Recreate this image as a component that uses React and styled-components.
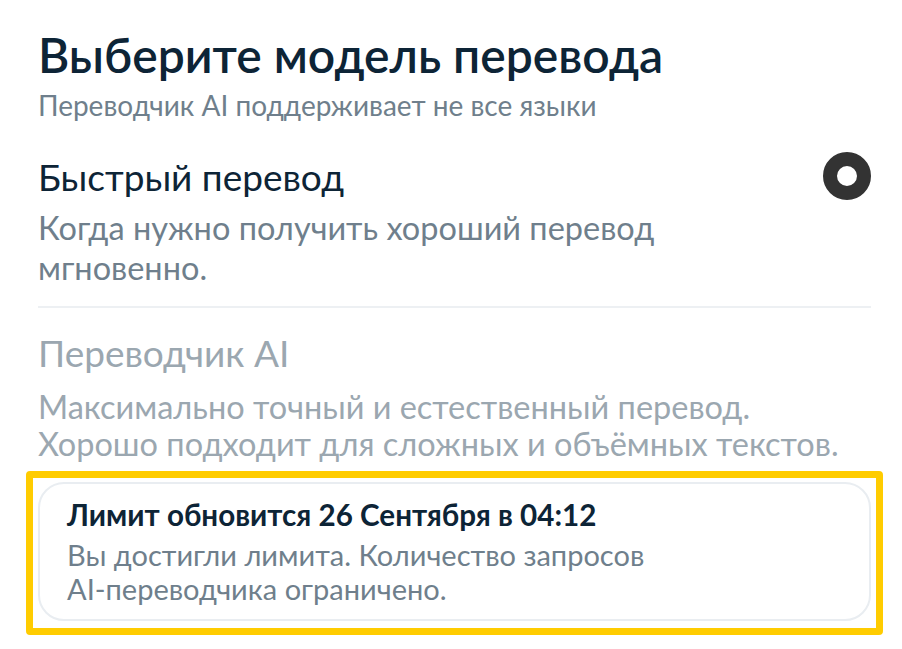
import React from 'react';
import styled, { createGlobalStyle } from 'styled-components';

const Global = createGlobalStyle`
  body {
    margin: 0;
    background: #fff;
    font-family: Lato, "Noto Sans", "DejaVu Sans", sans-serif;
  }
`;

const Page = styled.div`
  padding: 27px 31px 0 38px;
  color: #0d2436;
`;

const Title = styled.h1`
  margin: 0;
  font-size: 48px;
  font-weight: 600;
  line-height: 56px;
  color: #0d2436;
`;

const Subtitle = styled.div`
  margin-top: 4px;
  font-size: 28px;
  line-height: 36px;
  color: #6f7f8c;
`;

const Option = styled.div`
  display: flex;
  align-items: flex-start;
  justify-content: space-between;
  padding: ${p => p.$first ? '32px 0 18px' : '23px 0 0'};
  border-bottom: ${p => p.$divider ? '2px solid #edf0f3' : 'none'};
`;

const OptionText = styled.div`
  display: flex;
  flex-direction: column;
  gap: ${p => p.$disabled ? '13px' : '9px'};
`;

const OptionTitle = styled.div`
  font-size: 37px;
  line-height: 44px;
  color: ${p => p.$disabled ? '#9ba7b0' : '#0d2436'};
`;

const OptionDesc = styled.div`
  font-size: 32.5px;
  line-height: ${p => p.$disabled ? '37px' : '40px'};
  color: ${p => p.$disabled ? '#9ba7b0' : '#6f7f8c'};
  max-width: ${p => p.$narrow ? '700px' : '840px'};
`;

const Radio = styled.div`
  width: 20px;
  height: 20px;
  border-radius: 50%;
  border: 14.5px solid #333;
  margin-top: -3px;
  flex-shrink: 0;
`;

const Highlight = styled.div`
  margin: 9px -12px 0;
  border: 7px solid #ffcc00;
  border-radius: 4px;
  padding: 4px 5px 7px;
`;

const Card = styled.div`
  border: 2px solid #e9edf1;
  border-radius: 26px;
  padding: 12px 27px 13px;
`;

const CardTitle = styled.div`
  font-size: 29.6px;
  font-weight: 700;
  line-height: 38px;
  color: #0d2436;
`;

const CardText = styled.div`
  margin-top: 4px;
  font-size: 29px;
  line-height: 34px;
  color: #6f7f8c;
`;

export default function App() {
  return (
    <>
      <Global />
      <Page>
        <Title>Выберите модель перевода</Title>
        <Subtitle>Переводчик AI поддерживает не все языки</Subtitle>
        <Option $first $divider>
          <OptionText>
            <OptionTitle>Быстрый перевод</OptionTitle>
            <OptionDesc $narrow>Когда нужно получить хороший перевод мгновенно.</OptionDesc>
          </OptionText>
          <Radio />
        </Option>
        <Option>
          <OptionText $disabled>
            <OptionTitle $disabled>Переводчик AI</OptionTitle>
            <OptionDesc $disabled>
              Максимально точный и естественный перевод.<br />
              Хорошо подходит для сложных и объёмных текстов.
            </OptionDesc>
          </OptionText>
        </Option>
        <Highlight>
          <Card>
            <CardTitle>Лимит обновится 26 Сентября в 04:12</CardTitle>
            <CardText>
              Вы достигли лимита. Количество запросов<br />
              AI-переводчика ограничено.
            </CardText>
          </Card>
        </Highlight>
      </Page>
    </>
  );
}
